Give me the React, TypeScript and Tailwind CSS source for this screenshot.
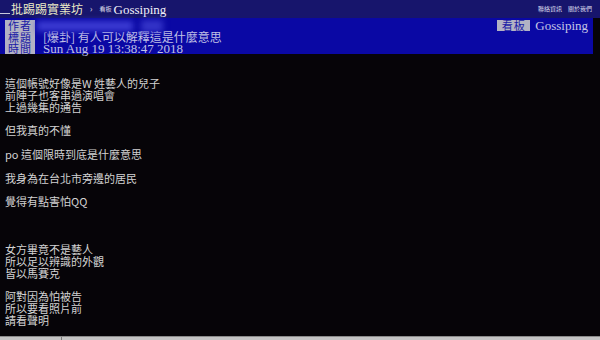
const cjk = { fontFamily: '"Noto Sans CJK TC", "Noto Sans", sans-serif' };
const serif = { fontFamily: '"Liberation Serif", "Noto Sans CJK TC", serif' };

const lines = [
  "這個帳號好像是W 姓藝人的兒子",
  "前陣子也客串過演唱會",
  "上過幾集的通告",
  "",
  "但我真的不懂",
  "",
  "po 這個限時到底是什麼意思",
  "",
  "我身為在台北市旁邊的居民",
  "",
  "覺得有點害怕QQ",
  "",
  "",
  "",
  "女方畢竟不是藝人",
  "所以足以辨識的外觀",
  "皆以馬賽克",
  "",
  "阿對因為怕被告",
  "所以要看照片前",
  "請看聲明",
];

function Label({ children, className = "" }: { children: string; className?: string }) {
  return (
    <div
      className={`flex w-[30px] shrink-0 items-center justify-center bg-[#b2b2c4] text-[11px] leading-[11px] tracking-[1px] text-[#1a1aa6] ${className}`}
      style={cjk}
    >
      {children}
    </div>
  );
}

export default function App() {
  return (
    <div className="flex h-[340px] w-[600px] flex-col overflow-hidden bg-[#060408]">
      {/* top bar */}
      <div className="flex h-[18px] shrink-0 items-center bg-[#17156c]">
        <div className="mt-[8px] h-px w-[10px] bg-[#c8c8dc]" />
        <span className="ml-[1px] text-[12px] leading-none text-[#ecebc6]" style={cjk}>
          批踢踢實業坊
        </span>
        <span className="ml-[7px] text-[8px] leading-none text-[#c8c8dc]">›</span>
        <span className="ml-[7px] text-[6px] leading-none text-[#e0e0ee]" style={cjk}>
          看板
        </span>
        <span className="ml-[2px] text-[13px] leading-none text-[#f2f2fa]" style={serif}>
          Gossiping
        </span>
        <div className="ml-auto mr-[8px] flex gap-[6px] text-[6px] leading-none text-[#dcdcec]" style={cjk}>
          <span>聯絡資訊</span>
          <span>關於我們</span>
        </div>
      </div>

      {/* article meta */}
      <div className="flex h-[36px] shrink-0">
        <div className="flex w-[593px] flex-col bg-[#0a08a4] pt-[2px] pl-[5px]">
          <div className="flex h-[11px] items-center">
            <Label className="h-full">作者</Label>
            <div className="ml-[2px] h-[10px] w-[96px] bg-[#3c3cd4] blur-[3px]" />
            <div className="ml-[8px] h-[12px] w-[22px] bg-[#3434c8] blur-[3px]" />
            <Label className="ml-auto h-[11px] w-[33px]">看板</Label>
            <span className="ml-[5px] mr-[5px] text-[13px] leading-none text-[#c4c4e4]" style={serif}>
              Gossiping
            </span>
          </div>
          <div className="flex h-[12px] items-center">
            <Label className="h-full">標題</Label>
            <span className="ml-[8px] text-[12px] leading-[12px] text-[#c0c0e6]" style={cjk}>
              [爆卦] 有人可以解釋這是什麼意思
            </span>
          </div>
          <div className="flex h-[11px] items-center">
            <Label className="h-full">時間</Label>
            <span className="ml-[8px] text-[13px] leading-[11px] text-[#c0c0e6]" style={serif}>
              Sun Aug 19 13:38:47 2018
            </span>
          </div>
        </div>
        <div className="flex-1 bg-[#060408]" />
      </div>

      {/* article body */}
      <div className="flex-1 pt-[24px] pl-[5px] text-[11px] text-[#d2d2d2]" style={cjk}>
        {lines.map((line, i) => (
          <div key={i} className="h-[11.85px] whitespace-pre leading-[11.85px]">
            {line}
          </div>
        ))}
      </div>

      {/* bottom bar */}
      <div className="flex h-[4px] shrink-0 border-t border-[#8a8a8a] bg-[#c4c4c4]">
        <div className="w-[62px] border-r border-[#7a7a7a]" />
      </div>
    </div>
  );
}
